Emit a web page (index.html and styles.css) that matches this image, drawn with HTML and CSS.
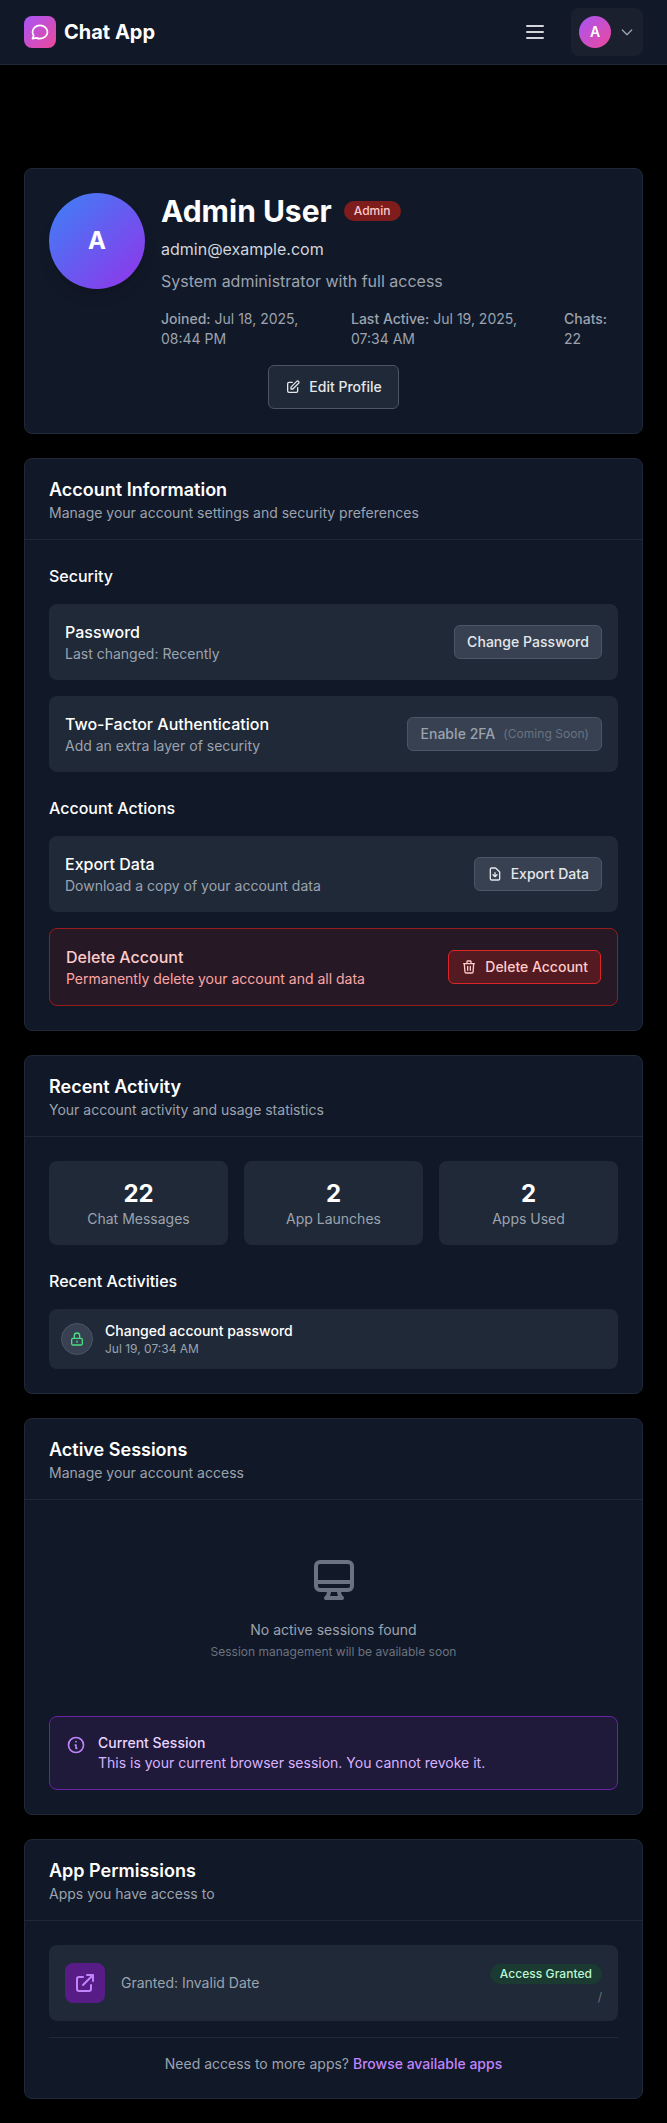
FILE: index.html
```html
<!DOCTYPE html>
<html lang="en">
<head>
<meta charset="utf-8">
<title>Chat App</title>
<link rel="stylesheet" href="styles.css">
</head>
<body>
<header class="topbar">
  <div class="brand">
    <div class="brand-logo">
      <svg class="icon icon-20" viewBox="0 0 24 24"><path d="M21 12c0 4.418-4.03 8-9 8a9.863 9.863 0 01-4.255-.949L3 20l1.395-3.72C3.512 15.042 3 13.574 3 12c0-4.418 4.03-8 9-8s9 3.582 9 8z"/></svg>
    </div>
    <span class="brand-name">Chat App</span>
  </div>
  <div class="topbar-actions">
    <button class="menu-button" aria-label="Menu">
      <svg class="icon icon-24" viewBox="0 0 24 24"><path d="M4 6h16M4 12h16M4 18h16"/></svg>
    </button>
    <button class="user-button">
      <span class="user-avatar">A</span>
      <svg class="icon icon-16" viewBox="0 0 24 24"><path d="M19 9l-7 7-7-7"/></svg>
    </button>
  </div>
</header>

<main class="page">
  <section class="card profile">
    <div class="profile-main">
      <div class="profile-avatar">A</div>
      <div class="profile-info">
        <div class="profile-name">
          <h1>Admin User</h1>
          <span class="badge badge-red">Admin</span>
        </div>
        <p class="profile-email">admin@example.com</p>
        <p class="profile-bio">System administrator with full access</p>
        <div class="profile-meta">
          <div><b>Joined:</b> Jul 18, 2025, 08:44 PM</div>
          <div><b>Last Active:</b> Jul 19, 2025, 07:34 AM</div>
          <div><b>Chats:</b> 22</div>
        </div>
      </div>
    </div>
    <button class="button button-large">
      <svg class="icon icon-16" viewBox="0 0 24 24"><path d="M11 5H6a2 2 0 00-2 2v11a2 2 0 002 2h11a2 2 0 002-2v-5m-1.414-9.414a2 2 0 112.828 2.828L11.828 15H9v-2.828l8.586-8.586z"/></svg>
      Edit Profile
    </button>
  </section>

  <section class="card">
    <div class="card-header">
      <h2>Account Information</h2>
      <p>Manage your account settings and security preferences</p>
    </div>
    <div class="card-body groups">
      <div class="group">
        <h3>Security</h3>
        <div class="row">
          <div>
            <h4>Password</h4>
            <p>Last changed: Recently</p>
          </div>
          <button class="button button-text">Change Password</button>
        </div>
        <div class="row">
          <div>
            <h4>Two-Factor Authentication</h4>
            <p>Add an extra layer of security</p>
          </div>
          <button class="button button-text button-disabled">Enable 2FA <small>(Coming Soon)</small></button>
        </div>
      </div>
      <div class="group">
        <h3>Account Actions</h3>
        <div class="row">
          <div>
            <h4>Export Data</h4>
            <p>Download a copy of your account data</p>
          </div>
          <button class="button">
            <svg class="icon icon-16" viewBox="0 0 24 24"><path d="M12 10v6m0 0l-3-3m3 3l3-3m2 8H7a2 2 0 01-2-2V5a2 2 0 012-2h5.586a1 1 0 01.707.293l5.414 5.414a1 1 0 01.293.707V19a2 2 0 01-2 2z"/></svg>
            Export Data
          </button>
        </div>
        <div class="row row-danger">
          <div>
            <h4>Delete Account</h4>
            <p>Permanently delete your account and all data</p>
          </div>
          <button class="button button-danger">
            <svg class="icon icon-16" viewBox="0 0 24 24"><path d="M19 7l-.867 12.142A2 2 0 0116.138 21H7.862a2 2 0 01-1.995-1.858L5 7m5 4v6m4-6v6m1-10V4a1 1 0 00-1-1h-4a1 1 0 00-1 1v3M4 7h16"/></svg>
            Delete Account
          </button>
        </div>
      </div>
    </div>
  </section>

  <section class="card">
    <div class="card-header">
      <h2>Recent Activity</h2>
      <p>Your account activity and usage statistics</p>
    </div>
    <div class="card-body groups">
      <div class="stats">
        <div class="stat"><strong>22</strong><span>Chat Messages</span></div>
        <div class="stat"><strong>2</strong><span>App Launches</span></div>
        <div class="stat"><strong>2</strong><span>Apps Used</span></div>
      </div>
      <div class="group">
        <h3>Recent Activities</h3>
        <div class="activity">
          <div class="activity-icon">
            <svg class="icon icon-16" viewBox="0 0 24 24"><path d="M12 15v2m-6 4h12a2 2 0 002-2v-6a2 2 0 00-2-2H6a2 2 0 00-2 2v6a2 2 0 002 2zm10-10V7a4 4 0 00-8 0v4h8z"/></svg>
          </div>
          <div>
            <p class="activity-title">Changed account password</p>
            <p class="activity-time">Jul 19, 07:34 AM</p>
          </div>
        </div>
      </div>
    </div>
  </section>

  <section class="card">
    <div class="card-header">
      <h2>Active Sessions</h2>
      <p>Manage your account access</p>
    </div>
    <div class="card-body groups">
      <div class="empty">
        <svg class="icon icon-48" viewBox="0 0 24 24"><path d="M9.75 17L9 20l-1 1h8l-1-1-.75-3M3 13h18M5 17h14a2 2 0 002-2V5a2 2 0 00-2-2H5a2 2 0 00-2 2v10a2 2 0 002 2z"/></svg>
        <p class="empty-title">No active sessions found</p>
        <p class="empty-note">Session management will be available soon</p>
      </div>
      <div class="notice">
        <svg class="icon icon-20" viewBox="0 0 24 24"><path d="M13 16h-1v-4h-1m1-4h.01M21 12a9 9 0 11-18 0 9 9 0 0118 0z"/></svg>
        <div>
          <p class="notice-title">Current Session</p>
          <p class="notice-text">This is your current browser session. You cannot revoke it.</p>
        </div>
      </div>
    </div>
  </section>

  <section class="card">
    <div class="card-header">
      <h2>App Permissions</h2>
      <p>Apps you have access to</p>
    </div>
    <div class="card-body">
      <div class="row">
        <div class="app">
          <div class="app-icon">
            <svg class="icon icon-24" viewBox="0 0 24 24"><path d="M10 6H6a2 2 0 00-2 2v10a2 2 0 002 2h10a2 2 0 002-2v-4M14 4h6m0 0v6m0-6L10 14"/></svg>
          </div>
          <p>Granted: Invalid Date</p>
        </div>
        <div class="app-status">
          <span class="badge badge-green">Access Granted</span>
          <span class="app-path">/</span>
        </div>
      </div>
      <p class="more-apps">Need access to more apps? <a href="#">Browse available apps</a></p>
    </div>
  </section>
</main>
</body>
</html>
```

FILE: styles.css
```css
* {
  box-sizing: border-box;
  margin: 0;
}

body {
  background: #000;
  color: #fff;
  font: 14px/20px Inter, "Liberation Sans", sans-serif;
}

button {
  font: inherit;
  border: 0;
}

.icon {
  flex: none;
  display: block;
  fill: none;
  stroke: currentColor;
  stroke-width: 2;
  stroke-linecap: round;
  stroke-linejoin: round;
}

.icon-16 { width: 16px; height: 16px; }
.icon-20 { width: 20px; height: 20px; }
.icon-24 { width: 24px; height: 24px; }
.icon-48 { width: 48px; height: 48px; }

/* Top bar */
.topbar {
  display: flex;
  align-items: center;
  justify-content: space-between;
  height: 65px;
  padding: 0 24px;
  background: #111827;
  border-bottom: 1px solid #1f2937;
}

.brand {
  display: flex;
  align-items: center;
  gap: 8px;
}

.brand-logo {
  display: grid;
  place-items: center;
  width: 32px;
  height: 32px;
  border-radius: 8px;
  background: linear-gradient(to bottom right, #a855f7, #ec4899);
}

.brand-name {
  font-size: 20px;
  line-height: 28px;
  font-weight: 700;
}

.topbar-actions {
  display: flex;
  align-items: center;
  gap: 16px;
}

.menu-button {
  padding: 8px;
  background: none;
  color: #d1d5db;
}

.user-button {
  display: flex;
  align-items: center;
  gap: 8px;
  padding: 8px;
  border-radius: 8px;
  background: #1a202d;
  color: #9ca3af;
}

.user-avatar {
  display: grid;
  place-items: center;
  width: 32px;
  height: 32px;
  border-radius: 50%;
  background: linear-gradient(to bottom right, #a855f7, #ec4899);
  color: #fff;
  font-weight: 600;
}

/* Cards */
.page {
  display: flex;
  flex-direction: column;
  gap: 24px;
  padding: 103px 24px 24px;
}

.card {
  background: #111827;
  border: 1px solid #1f2937;
  border-radius: 8px;
}

.card-header {
  padding: 16px 24px;
  border-bottom: 1px solid #1f2937;
  color: #9ca3af;
}

.card-header h2 {
  margin-bottom: -2px;
  color: #fff;
  font-size: 18px;
  line-height: 30px;
  font-weight: 600;
}

.card-body {
  padding: 24px;
}

.groups {
  display: flex;
  flex-direction: column;
  gap: 24px;
}

.group {
  display: flex;
  flex-direction: column;
  gap: 16px;
}

.group h3,
.row h4 {
  color: #fff;
  font-size: 16px;
  line-height: 24px;
  font-weight: 500;
}

.row {
  display: flex;
  align-items: center;
  justify-content: space-between;
  padding: 16px;
  border-radius: 8px;
  background: #1f2937;
  color: #9ca3af;
}

.row-danger {
  border: 1px solid #991b1b;
  background: rgba(127, 29, 29, 0.2);
  color: #fca5a5;
}

.row-danger h4 {
  color: #fecaca;
}

/* Buttons and badges */
.button {
  display: flex;
  align-items: center;
  gap: 8px;
  padding: 6px 12px;
  border: 1px solid #4b5563;
  border-radius: 6px;
  background: #374151;
  color: #e5e7eb;
  font-weight: 500;
}

.button-text {
  letter-spacing: 0.04px;
}

.button small {
  color: #6b7280;
  font-size: 12px;
  line-height: 16px;
  font-weight: 400;
}

.button-disabled {
  color: #9ca3af;
}

.button-danger {
  border-color: #dc2626;
  background: rgba(127, 29, 29, 0.5);
  color: #fecaca;
}

.button-large {
  padding: 11px 16px;
  background: #1f2937;
}

.badge {
  padding: 2px 10px;
  border-radius: 10px;
  font-size: 12px;
  line-height: 16px;
  font-weight: 500;
}

.badge-red {
  background: #7f1d1d;
  color: #fecaca;
}

.badge-green {
  background: #1a3a32;
  color: #bbf7d0;
  letter-spacing: 0.05px;
}

/* Profile */
.profile {
  display: flex;
  flex-direction: column;
  align-items: center;
  gap: 16px;
  padding: 24px;
}

.profile-main {
  display: flex;
  gap: 16px;
  width: 100%;
}

.profile-avatar {
  display: grid;
  place-items: center;
  flex: none;
  width: 96px;
  height: 96px;
  border-radius: 50%;
  background: linear-gradient(to bottom right, #3b82f6, #9333ea);
  box-shadow: 0 10px 15px -3px rgba(0, 0, 0, 0.1), 0 4px 6px -4px rgba(0, 0, 0, 0.1);
  font-size: 24px;
  line-height: 34px;
  font-weight: 700;
}

.profile-info {
  flex: 1;
}

.profile-name {
  display: flex;
  align-items: center;
  gap: 12px;
}

.profile-name h1 {
  font-size: 30px;
  line-height: 36px;
  font-weight: 700;
}

.profile-email,
.profile-bio {
  margin-top: 8px;
  font-size: 16px;
  line-height: 24px;
}

.profile-email { color: #d1d5db; }
.profile-bio { color: #9ca3af; }

.profile-meta {
  display: grid;
  grid-template-columns: 166px 189px 1fr;
  gap: 24px;
  margin-top: 16px;
  color: #9ca3af;
}

.profile-meta b {
  font-weight: 500;
}

/* Activity */
.stats {
  display: grid;
  grid-template-columns: repeat(3, 1fr);
  gap: 16px;
}

.stat {
  display: flex;
  flex-direction: column;
  align-items: center;
  padding: 16px;
  border-radius: 8px;
  background: #1f2937;
  color: #9ca3af;
}

.stat strong {
  margin-bottom: -2px;
  color: #fff;
  font-size: 24px;
  line-height: 34px;
  font-weight: 700;
}

.activity {
  display: flex;
  align-items: center;
  gap: 12px;
  padding: 12px;
  border-radius: 8px;
  background: #1f2937;
}

.activity-icon {
  display: grid;
  place-items: center;
  width: 32px;
  height: 32px;
  border: 1px solid #4b5563;
  border-radius: 50%;
  background: #374151;
  color: #4ade80;
}

.activity-title {
  font-weight: 500;
}

.activity-time {
  color: #9ca3af;
  font-size: 12px;
  line-height: 16px;
}

/* Sessions */
.empty {
  display: flex;
  flex-direction: column;
  align-items: center;
  padding: 32px 0;
  color: #6b7280;
}

.empty-title {
  margin-top: 16px;
  color: #9ca3af;
}

.empty-note {
  margin-top: 4px;
  font-size: 12px;
  line-height: 16px;
}

.notice {
  display: flex;
  gap: 12px;
  padding: 16px;
  border: 1px solid #6b21a8;
  border-radius: 8px;
  background: rgba(88, 28, 135, 0.2);
  color: #c084fc;
}

.notice .icon {
  margin-top: 2px;
}

.notice-title {
  color: #e9d5ff;
  font-weight: 500;
}

.notice-text {
  color: #d8b4fe;
}

/* Permissions */
.app {
  display: flex;
  align-items: center;
  gap: 16px;
}

.app-icon {
  display: grid;
  place-items: center;
  width: 40px;
  height: 40px;
  border-radius: 8px;
  background: #581c87;
  color: #c084fc;
}

.app-status {
  display: flex;
  flex-direction: column;
  align-items: flex-end;
  gap: 5px;
  padding-top: 3px;
}

.app-path {
  color: #6b7280;
  font-size: 12px;
  line-height: 16px;
}

.more-apps {
  margin-top: 16px;
  padding-top: 16px;
  border-top: 1px solid #1f2937;
  color: #9ca3af;
  text-align: center;
}

.more-apps a {
  color: #c084fc;
  font-weight: 500;
  text-decoration: none;
}
```
